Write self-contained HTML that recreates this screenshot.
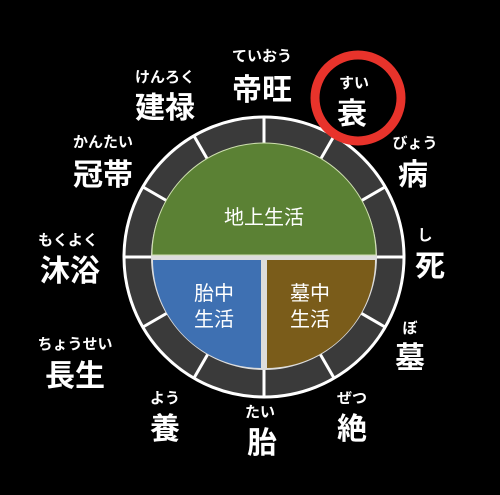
<!DOCTYPE html><html><head><meta charset="utf-8"><style>
html,body{margin:0;padding:0;background:#000;}
svg{display:block}
text{font-family:"Liberation Sans","Noto Sans CJK JP",sans-serif;fill:#fff;text-anchor:middle}
.b{font-size:30px;font-weight:bold}
.s{font-size:15px;font-weight:bold}
.i{font-size:20px}
</style></head><body>
<svg width="500" height="495" viewBox="0 0 500 495">
<circle cx="264" cy="257" r="140" fill="#3a3a3a" stroke="#fff" stroke-width="3"/>
<g stroke="#fff" stroke-width="3">
<line x1="124" y1="257" x2="404" y2="257"/>
<line x1="264" y1="117" x2="264" y2="397"/>
<line x1="385" y1="187" x2="143" y2="327"/>
<line x1="334" y1="136" x2="194" y2="378"/>
<line x1="385" y1="327" x2="143" y2="187"/>
<line x1="334" y1="378" x2="194" y2="136"/>
</g>
<circle cx="264" cy="257" r="113" fill="#ddd"/>
<path d="M152,255 A112,112 0 0 1 376,255 Z" fill="#5b8134" stroke="#cfe0b0" stroke-width="1"/>
<path d="M153,260 L261,260 L261,368 A108,108 0 0 1 153,260 Z" fill="#3e70b2"/>
<path d="M267,260 L375,260 A108,108 0 0 1 267,368 Z" fill="#7a5c1a"/>
<text class="i" x="264" y="224">地上生活</text>
<text class="i" x="214" y="300">胎中</text>
<text class="i" x="214" y="326">生活</text>
<text class="i" x="310" y="300">墓中</text>
<text class="i" x="310" y="326">生活</text>
<circle cx="358" cy="98" r="43" fill="none" stroke="#e8332b" stroke-width="9"/>
<text class="s" x="262" y="61">ていおう</text><text class="b" x="262" y="100">帝旺</text>
<text class="s" x="354" y="88">すい</text><text class="b" x="352" y="124">衰</text>
<text class="s" x="165" y="82">けんろく</text><text class="b" x="165" y="118">建禄</text>
<text class="s" x="415" y="148">びょう</text><text class="b" x="413" y="185">病</text>
<text class="s" x="103" y="147">かんたい</text><text class="b" x="103" y="185">冠帯</text>
<text class="s" x="425" y="240">し</text><text class="b" x="430" y="276">死</text>
<text class="s" x="68" y="245">もくよく</text><text class="b" x="70" y="281">沐浴</text>
<text class="s" x="410" y="333">ぼ</text><text class="b" x="410" y="368">墓</text>
<text class="s" x="75" y="349">ちょうせい</text><text class="b" x="75" y="386">長生</text>
<text class="s" x="165" y="403">よう</text><text class="b" x="165" y="439">養</text>
<text class="s" x="260" y="417">たい</text><text class="b" x="262" y="453">胎</text>
<text class="s" x="352" y="403">ぜつ</text><text class="b" x="352" y="439">絶</text>
</svg>
</body></html>
